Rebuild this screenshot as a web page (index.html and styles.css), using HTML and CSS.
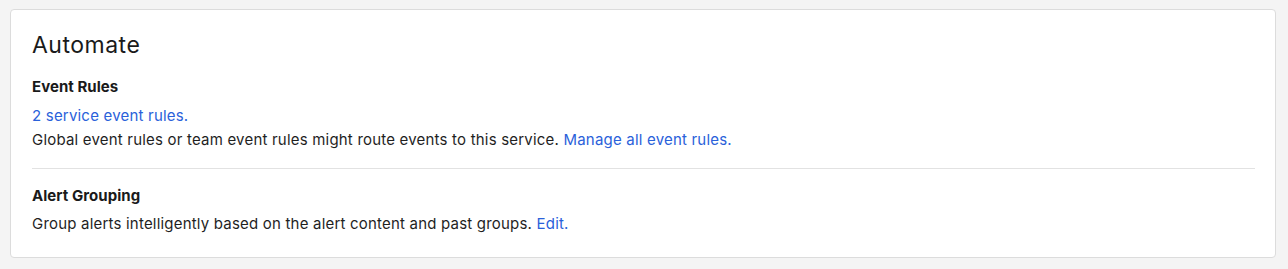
FILE: index.html
```html
<!DOCTYPE html>
<html lang="en">
<head>
  <meta charset="UTF-8">
  <meta name="viewport" content="width=device-width, initial-scale=1.0">
  <title>Automate</title>
  <link rel="stylesheet" href="styles.css">
</head>
<body>
  <div class="card">
    <h2 class="card-title">Automate</h2>

    <div class="section">
      <h3 class="section-title">Event Rules</h3>
      <div class="section-body">
        <a href="#" class="link">2 service event rules.</a><br>
        Global event rules or team event rules might route events to this service. <a href="#" class="link">Manage all event rules.</a>
      </div>
    </div>

    <hr class="divider">

    <div class="section">
      <h3 class="section-title">Alert Grouping</h3>
      <div class="section-body">
        Group alerts intelligently based on the alert content and past groups. <a href="#" class="link">Edit.</a>
      </div>
    </div>
  </div>
</body>
</html>
```

FILE: styles.css
```css
body {
  margin: 0;
  padding: 9px 12px 11px 10px;
  background-color: #f4f4f4;
  font-family: Inter, "Open Sans", sans-serif;
  color: #1f1f1f;
}

.card {
  background-color: #fff;
  border: 1px solid #dcdcdc;
  border-radius: 4px;
  padding: 21px 20px 21px 21px;
}

.card-title {
  margin: 0 0 18px 0;
  font-size: 23px;
  line-height: 28px;
  font-weight: 400;
  letter-spacing: 0.5px;
  color: #1a1a1a;
}

.section-title {
  margin: 0 0 6px 0;
  font-size: 15px;
  line-height: 20px;
  font-weight: 700;
  letter-spacing: 0.05px;
  color: #1a1a1a;
}

.section:first-of-type .section-title {
  margin-bottom: 7px;
}

.section-body {
  font-size: 15px;
  line-height: 24px;
  letter-spacing: 0.2px;
}

.link {
  color: #2a61da;
  text-decoration: none;
}

.divider {
  border: none;
  border-top: 1px solid #e2e2e2;
  margin: 16px 0 17px 0;
}
```
